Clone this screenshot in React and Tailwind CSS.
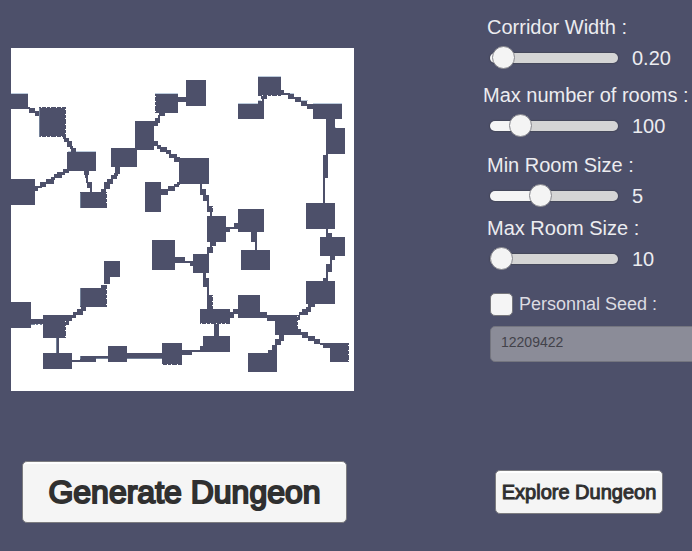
import React, { useState } from 'react';

// [x, y, width, height] on the 343 x 343 map
const rooms = [
  [0, 46, 17, 15], [28, 59, 27, 30], [56, 104, 29, 19], [0, 131, 24, 26],
  [69, 144, 27, 16], [100, 100, 26, 19], [124, 73, 19, 29], [144, 46, 23, 19],
  [175, 32, 20, 26], [134, 134, 16, 30], [168, 110, 30, 26], [247, 29, 23, 19],
  [227, 56, 26, 15], [302, 56, 29, 15], [315, 80, 19, 26], [295, 155, 29, 26],
  [227, 161, 26, 23], [196, 168, 19, 26], [230, 202, 29, 20], [141, 192, 23, 30],
  [182, 206, 16, 19], [309, 189, 25, 19], [295, 233, 29, 23], [227, 247, 22, 23],
  [189, 261, 30, 15], [192, 288, 27, 16], [264, 267, 23, 20], [237, 305, 29, 19],
  [319, 295, 19, 19], [151, 295, 20, 22], [97, 298, 19, 16], [32, 305, 29, 16],
  [32, 267, 23, 23], [0, 254, 20, 26], [69, 240, 27, 19], [93, 213, 16, 16]
];

const corridors = [
  [17, 59, 2, 2], [18, 60, 6, 5], [24, 63, 5, 5],
  [52, 89, 3, 2], [53, 90, 5, 4], [56, 93, 5, 6], [59, 98, 3, 3], [60, 100, 5, 4],
  [52, 121, 6, 4], [46, 124, 8, 3], [43, 126, 8, 4], [40, 129, 4, 3], [35, 131, 8, 5], [29, 134, 6, 5], [24, 138, 7, 2], [24, 140, 3, 3],
  [73, 123, 5, 4], [74, 127, 3, 3], [75, 129, 2, 6], [76, 134, 5, 6], [79, 140, 2, 4],
  [90, 141, 5, 3], [93, 134, 6, 7], [96, 131, 6, 5], [100, 127, 6, 4], [103, 125, 4, 3], [104, 119, 5, 7],
  [143, 73, 4, 5], [144, 70, 5, 5], [147, 67, 2, 4], [148, 65, 6, 3],
  [167, 49, 8, 5],
  [143, 93, 4, 5], [146, 97, 4, 4], [149, 99, 7, 5], [155, 102, 5, 4], [158, 106, 8, 4], [163, 109, 6, 5],
  [150, 141, 7, 6], [157, 138, 7, 5], [163, 136, 5, 3], [166, 134, 3, 3],
  [189, 136, 2, 5], [189, 141, 6, 6], [192, 147, 6, 6], [196, 152, 2, 6], [196, 158, 6, 6], [199, 164, 2, 4],
  [250, 47, 6, 4], [251, 50, 2, 6], [247, 53, 6, 3],
  [270, 42, 3, 5], [270, 45, 9, 2], [277, 46, 6, 5], [283, 49, 3, 2], [284, 49, 6, 5], [290, 53, 6, 5], [296, 56, 6, 5],
  [315, 71, 9, 9], [315, 106, 2, 2], [312, 107, 5, 23], [312, 130, 2, 25],
  [215, 179, 4, 5], [217, 179, 10, 2], [223, 175, 4, 6],
  [240, 184, 6, 10], [244, 194, 2, 8],
  [199, 194, 6, 4], [196, 199, 6, 6], [199, 197, 2, 3], [196, 204, 2, 3],
  [164, 209, 10, 6], [169, 213, 10, 2], [179, 213, 3, 5],
  [192, 225, 3, 5], [192, 230, 6, 9], [196, 239, 2, 22], [196, 247, 6, 14],
  [203, 276, 5, 12],
  [219, 264, 4, 6], [222, 261, 5, 5],
  [249, 264, 7, 6], [256, 267, 8, 6],
  [287, 267, 2, 5], [288, 264, 9, 3], [291, 261, 6, 5], [295, 259, 5, 5], [297, 256, 7, 3],
  [287, 281, 3, 6], [288, 284, 9, 3], [291, 286, 6, 4], [297, 288, 7, 5], [303, 291, 6, 5], [309, 295, 10, 2], [312, 295, 7, 5],
  [268, 287, 5, 6], [264, 291, 6, 6], [261, 297, 5, 8], [257, 302, 4, 3],
  [189, 298, 3, 5], [171, 302, 10, 5], [181, 302, 11, 2],
  [116, 305, 35, 5],
  [61, 312, 24, 2], [69, 308, 16, 6], [85, 308, 12, 2],
  [46, 290, 2, 15],
  [55, 272, 3, 5], [55, 267, 6, 6], [61, 267, 4, 3], [62, 264, 10, 3], [66, 261, 6, 5], [70, 259, 5, 4],
  [20, 271, 12, 5],
  [90, 237, 6, 3], [93, 229, 6, 7],
  [315, 181, 2, 8], [317, 185, 4, 4],
  [319, 208, 5, 4], [319, 212, 2, 4], [315, 216, 6, 8], [315, 223, 2, 7], [312, 230, 5, 3]
];

// pale rims above rooms
const rims = [
  [0, 45, 17, 1], [144, 45, 23, 1], [57, 103, 28, 1], [247, 28, 23, 1], [227, 55, 20, 1],
  [302, 55, 29, 1], [273, 45, 10, 1], [290, 52, 7, 1], [317, 79, 8, 1], [247, 52, 3, 1]
];

// grey-green rims beside and below rooms
const shades = [
  [28, 60, 1, 29], [69, 145, 1, 15], [69, 240, 1, 18], [45, 290, 1, 15],
  [116, 310, 35, 1], [85, 310, 12, 1], [20, 276, 4, 1], [25, 276, 2, 1],
  [29, 276, 2, 1], [69, 308, 1, 3]
];

// crumbled walls, drawn as [x1, y1, x2, y2]
const crumbled = [
  [54.5, 61, 54.5, 88], [30, 88.5, 54, 88.5], [30, 59.5, 54, 59.5], [144.5, 48, 144.5, 65],
  [95.5, 145, 95.5, 160], [251, 47.5, 270, 47.5], [95.5, 241, 95.5, 258], [54.5, 273, 54.5, 289],
  [201.5, 248, 201.5, 260], [201.5, 159, 201.5, 164], [337.5, 297, 337.5, 313], [286.5, 268, 286.5, 280],
  [190, 275.5, 219, 275.5], [151, 316.5, 171, 316.5]
];

const toPath = (rects) => rects.map(([x, y, w, h]) => `M${x} ${y}h${w}v${h}h${-w}z`).join('');

const DungeonMap = () => (
  <svg viewBox="0 0 343 343" className="block w-full bg-white" shapeRendering="crispEdges" role="img" aria-label="Dungeon">
    <path d={toPath(rims)} fill="#bccbdc" />
    <path d={toPath(rooms)} fill="#4d506a" />
    <path d={toPath(corridors)} fill="#4d506a" />
    <path d={toPath(shades)} fill="#75839a" />
    {crumbled.map(([x1, y1, x2, y2], i) => (
      <line key={i} x1={x1} y1={y1} x2={x2} y2={y2} stroke="#fff" strokeDasharray="1 4 1 3 1 5" />
    ))}
  </svg>
);

const SliderField = ({ id, label, min, max, step, initial, digits, labelClass, className }) => {
  const [value, setValue] = useState(initial);
  const ratio = (value - min) / (max - min);

  return (
    <div className={className}>
      <label htmlFor={id} className={`block h-7 text-xl leading-7 whitespace-nowrap ${labelClass}`}>{label}</label>
      <div className="flex h-[34px] items-center pl-[7px]">
        <input
          id={id}
          type="range"
          min={min}
          max={max}
          step={step}
          value={value}
          onChange={(e) => setValue(Number(e.target.value))}
          style={{ '--fill': `${ratio * 100}%` }}
          className="h-6 w-32 shrink-0 appearance-none bg-transparent [&::-webkit-slider-runnable-track]:h-[10px] [&::-webkit-slider-runnable-track]:rounded-full [&::-webkit-slider-runnable-track]:bg-[linear-gradient(to_right,#f5f5f5_var(--fill),#d5d5d5_var(--fill))] [&::-webkit-slider-runnable-track]:shadow-[0_0_1px_1px_#45475a] [&::-webkit-slider-thumb]:-mt-[7px] [&::-webkit-slider-thumb]:size-[23px] [&::-webkit-slider-thumb]:appearance-none [&::-webkit-slider-thumb]:rounded-full [&::-webkit-slider-thumb]:border [&::-webkit-slider-thumb]:border-[#86868c] [&::-webkit-slider-thumb]:bg-[#f4f4f4]"
        />
        <output htmlFor={id} className="pl-[14px] text-xl leading-7">{value.toFixed(digits)}</output>
      </div>
    </div>
  );
};

const App = () => {
  const [usePersonalSeed, setUsePersonalSeed] = useState(false);
  const [seed, setSeed] = useState('12209422');

  return (
    <div className="flex min-h-screen justify-between overflow-hidden bg-[#4d506a] font-['Liberation_Sans',Arial,sans-serif] text-[#ececf0]">
      {/* Map */}
      <main className="w-[354px] shrink-0 pt-12 pl-[11px]">
        <DungeonMap />
        <button
          type="button"
          className="mt-[70px] ml-[11px] h-[62px] w-[325px] rounded-[5px] border border-[#7c7c80] bg-[#f5f5f5] text-[32px] text-[#303030] shadow-[inset_0_2px_0_#ffffff] [-webkit-text-stroke:2px_#303030]"
        >
          Generate Dungeon
        </button>
      </main>

      {/* Settings */}
      <aside className="w-[209px] shrink-0 pt-[13px]">
        <SliderField id="corridor" label="Corridor Width :" min={0.1} max={5} step={0.1} initial={0.2} digits={2} labelClass="pl-1" />
        <SliderField id="rooms" label="Max number of rooms :" min={10} max={500} step={1} initial={100} digits={0} labelClass="" className="mt-1.5" />
        <SliderField id="minSize" label="Min Room Size :" min={2} max={10} step={1} initial={5} digits={0} labelClass="pl-1" className="mt-2" />
        <SliderField id="maxSize" label="Max Room Size :" min={10} max={50} step={1} initial={10} digits={0} labelClass="pl-1" className="mt-px" />

        <div className="mt-4 flex items-center gap-1.5 pl-[7px]">
          <input
            id="personalSeed"
            type="checkbox"
            checked={usePersonalSeed}
            onChange={(e) => setUsePersonalSeed(e.target.checked)}
            className="size-[23px] shrink-0 appearance-none rounded-[5px] border border-[#77777c] bg-[#f5f5f5] checked:bg-[#9fa3c4]"
          />
          <label htmlFor="personalSeed" className="text-lg leading-6 whitespace-nowrap text-[#dcdce2]">Personnal Seed :</label>
        </div>
        <input
          type="text"
          aria-label="Seed"
          value={seed}
          onChange={(e) => setSeed(e.target.value)}
          disabled={!usePersonalSeed}
          className="mt-[10px] ml-[7px] block h-9 w-60 rounded-[5px] border border-[#74757f] bg-[#8b8c98] px-[10px] pb-1 text-sm text-[#42424a]"
        />

        <button
          type="button"
          className="mt-[108px] ml-3 h-11 w-[168px] rounded-[5px] border border-[#7c7c80] bg-[#f5f5f5] text-xl text-[#303030] shadow-[inset_0_2px_0_#ffffff] [-webkit-text-stroke:1px_#303030]"
        >
          Explore Dungeon
        </button>
      </aside>
    </div>
  );
};

export default App;
